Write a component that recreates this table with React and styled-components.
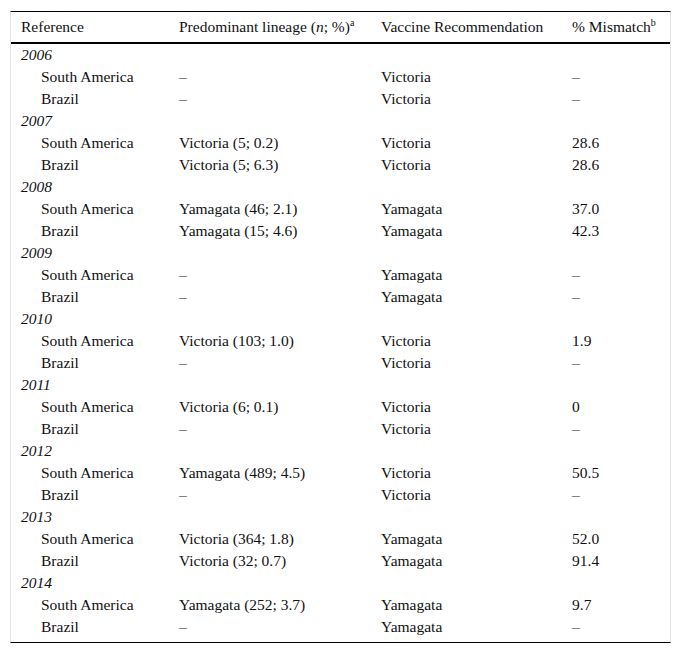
import React from 'react';
import styled, { createGlobalStyle } from 'styled-components';

const GlobalStyle = createGlobalStyle`
  body {
    margin: 0;
    background: #ffffff;
    font-family: 'Liberation Serif', 'Times New Roman', serif;
    color: #111111;
  }
`;

const Page = styled.div`
  padding: 11px 11px 0 10px;
`;

const Table = styled.div`
  border-top: 1px solid #000000;
  border-bottom: 1px solid #000000;
  border-left: 1px solid #e4e4e4;
  border-right: 1px solid #e4e4e4;
  font-size: 15.5px;
  padding-bottom: 4px;
`;

const Row = styled.div`
  display: grid;
  grid-template-columns: 158px 202px 191px 1fr;
  height: ${({ height }) => height || '22px'};
  line-height: ${({ height }) => height || '22px'};
  border-bottom: ${({ divider }) => (divider ? '2px solid #000000' : 'none')};
`;

const Cell = styled.div`
  padding-left: ${({ indent }) => (indent ? '30px' : '10px')};
  white-space: nowrap;
`;

const YearCell = styled.div`
  grid-column: 1 / -1;
  padding-left: 10px;
  font-style: italic;
`;

const Sup = styled.sup`
  font-size: 10px;
  line-height: 0;
  vertical-align: 6px;
`;

const data = [
  { year: '2006', rows: [
    ['South America', '–', 'Victoria', '–'],
    ['Brazil', '–', 'Victoria', '–'],
  ] },
  { year: '2007', rows: [
    ['South America', 'Victoria (5; 0.2)', 'Victoria', '28.6'],
    ['Brazil', 'Victoria (5; 6.3)', 'Victoria', '28.6'],
  ] },
  { year: '2008', rows: [
    ['South America', 'Yamagata (46; 2.1)', 'Yamagata', '37.0'],
    ['Brazil', 'Yamagata (15; 4.6)', 'Yamagata', '42.3'],
  ] },
  { year: '2009', rows: [
    ['South America', '–', 'Yamagata', '–'],
    ['Brazil', '–', 'Yamagata', '–'],
  ] },
  { year: '2010', rows: [
    ['South America', 'Victoria (103; 1.0)', 'Victoria', '1.9'],
    ['Brazil', '–', 'Victoria', '–'],
  ] },
  { year: '2011', rows: [
    ['South America', 'Victoria (6; 0.1)', 'Victoria', '0'],
    ['Brazil', '–', 'Victoria', '–'],
  ] },
  { year: '2012', rows: [
    ['South America', 'Yamagata (489; 4.5)', 'Victoria', '50.5'],
    ['Brazil', '–', 'Victoria', '–'],
  ] },
  { year: '2013', rows: [
    ['South America', 'Victoria (364; 1.8)', 'Yamagata', '52.0'],
    ['Brazil', 'Victoria (32; 0.7)', 'Yamagata', '91.4'],
  ] },
  { year: '2014', rows: [
    ['South America', 'Yamagata (252; 3.7)', 'Yamagata', '9.7'],
    ['Brazil', '–', 'Yamagata', '–'],
  ] },
];

export default function App() {
  return (
    <Page>
      <GlobalStyle />
      <Table>
        <Row height="30px" divider>
          <Cell>Reference</Cell>
          <Cell>Predominant lineage (<i>n</i>; %)<Sup>a</Sup></Cell>
          <Cell>Vaccine Recommendation</Cell>
          <Cell>% Mismatch<Sup>b</Sup></Cell>
        </Row>
        {data.map((group) => (
          <React.Fragment key={group.year}>
            <Row>
              <YearCell>{group.year}</YearCell>
            </Row>
            {group.rows.map((r, i) => (
              <Row key={i}>
                <Cell indent>{r[0]}</Cell>
                <Cell>{r[1]}</Cell>
                <Cell>{r[2]}</Cell>
                <Cell>{r[3]}</Cell>
              </Row>
            ))}
          </React.Fragment>
        ))}
      </Table>
    </Page>
  );
}
